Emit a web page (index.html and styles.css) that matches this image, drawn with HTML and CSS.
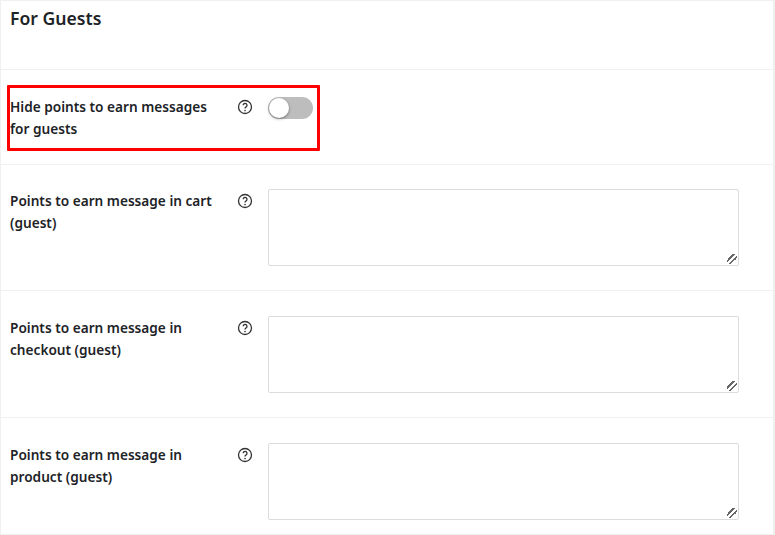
FILE: index.html
```html
<!DOCTYPE html>
<html lang="en">
<head>
<meta charset="utf-8">
<title>For Guests</title>
<link rel="stylesheet" href="styles.css">
</head>
<body>
<main class="panel">
  <header class="panel-head"><h2>For Guests</h2></header>
  <section class="row row-toggle">
    <div class="field highlighted">
      <label class="label">Hide points to earn messages for guests</label>
      <svg class="help" viewBox="0 0 16 16"><circle cx="8" cy="8" r="6.5"/><path d="M6.2 6.3a1.9 1.9 0 1 1 2.9 1.6c-.7.4-1.1.8-1.1 1.6"/><circle class="dot" cx="8" cy="11.6" r=".8"/></svg>
      <span class="toggle"><span class="knob"></span></span>
    </div>
  </section>
  <section class="row">
    <div class="field">
      <label class="label">Points to earn message in cart (guest)</label>
      <svg class="help" viewBox="0 0 16 16"><circle cx="8" cy="8" r="6.5"/><path d="M6.2 6.3a1.9 1.9 0 1 1 2.9 1.6c-.7.4-1.1.8-1.1 1.6"/><circle class="dot" cx="8" cy="11.6" r=".8"/></svg>
      <textarea class="area"></textarea>
    </div>
  </section>
  <section class="row spaced">
    <div class="field">
      <label class="label">Points to earn message in checkout (guest)</label>
      <svg class="help" viewBox="0 0 16 16"><circle cx="8" cy="8" r="6.5"/><path d="M6.2 6.3a1.9 1.9 0 1 1 2.9 1.6c-.7.4-1.1.8-1.1 1.6"/><circle class="dot" cx="8" cy="11.6" r=".8"/></svg>
      <textarea class="area"></textarea>
    </div>
  </section>
  <section class="row spaced last">
    <div class="field">
      <label class="label">Points to earn message in product (guest)</label>
      <svg class="help" viewBox="0 0 16 16"><circle cx="8" cy="8" r="6.5"/><path d="M6.2 6.3a1.9 1.9 0 1 1 2.9 1.6c-.7.4-1.1.8-1.1 1.6"/><circle class="dot" cx="8" cy="11.6" r=".8"/></svg>
      <textarea class="area"></textarea>
    </div>
  </section>
</main>
</body>
</html>
```
FILE: styles.css
```css
* { box-sizing: border-box; }
html, body { margin: 0; height: 100%; background: #fff; overflow: hidden; }
body { font-family: "Noto Sans", "Open Sans", sans-serif; color: #23282d; }
.panel {
  width: 775px;
  height: 535px;
  border: 1px solid #f0f0f1;
  border-width: 1px 2px 1px 1px;
  overflow: hidden;
}
.panel-head { height: 69px; border-bottom: 1px solid #f0f0f1; padding: 5px 0 0 9px; }
.panel-head h2 { margin: 0; font-size: 17.6px; line-height: 24px; font-weight: 600; color: #1d2327; }
.row { border-bottom: 1px solid #f0f0f1; padding: 24px 0 24px 9px; }
.row.spaced { padding-top: 25px; }
.row.last { border-bottom: 0; padding-bottom: 14px; }
.row-toggle { padding: 15px 0 13px 6px; }
.field { display: flex; align-items: flex-start; }
.label {
  flex: none;
  width: 212px;
  margin: 1px 14.5px 0 0;
  font-size: 13.65px;
  line-height: 22px;
  font-weight: 600;
  color: #1d2327;
}
.help {
  flex: none;
  width: 16px;
  height: 16px;
  margin: 4px 15.5px 0 0;
  fill: none;
  stroke: #333;
  stroke-width: 1.3;
}
.help .dot { fill: #333; stroke: none; }
.area {
  width: 471px;
  height: 77px;
  border: 1px solid #dcdcde;
  border-radius: 2px;
  background: #fff;
  display: block;
  margin: 0;
}
.area::-webkit-resizer {
  background: linear-gradient(135deg, transparent 30%, #666 30% 42%, transparent 42% 58%, #666 58% 70%, transparent 70%) right 1px bottom 1px / 10px 10px no-repeat;
}
.highlighted {
  width: 313px;
  height: 66px;
  border: 3px solid #f00;
  border-radius: 1px;
  padding: 8px 0 0 0;
}
.highlighted .label { margin-top: 0; }
.highlighted .help { margin-top: 3px; }
.toggle {
  flex: none;
  width: 45px;
  height: 22px;
  border-radius: 11px;
  background: #bdbdbd;
  padding: 1px;
  margin-top: 1px;
  display: flex;
}
.knob {
  width: 20px;
  height: 20px;
  border-radius: 50%;
  background: #fff;
  box-shadow: 0 1px 3px rgba(0,0,0,.4);
}
```
